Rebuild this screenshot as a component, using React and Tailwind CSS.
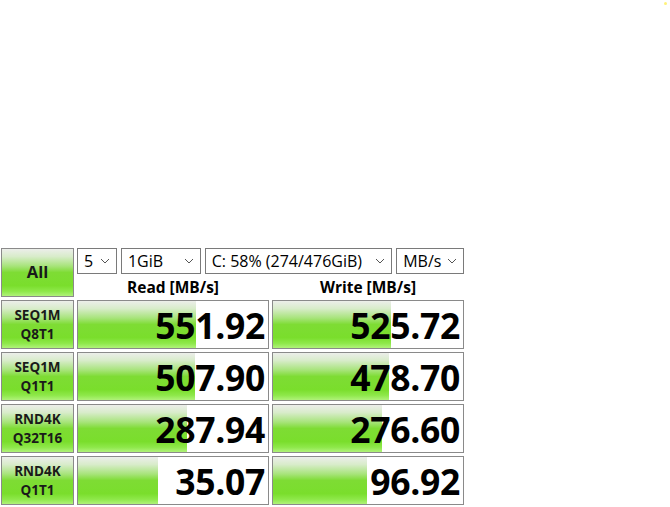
import React from "react";

const grad =
  "bg-[linear-gradient(to_bottom,#eceeea_0%,#d8ecca_16%,#a8e47c_36%,#7edc34_50%,#7ade2c_78%,#8ee84a_90%,#b0f27a_100%)]";

function Chevron() {
  return (
    <svg width="10" height="6" viewBox="0 0 10 6" className="shrink-0">
      <path d="M1 1 L5 5 L9 1" fill="none" stroke="#555" strokeWidth="1" />
    </svg>
  );
}

function Select({ w, label }) {
  return (
    <div
      className={`${w} h-[26px] border border-[#7a7a7a] bg-white flex items-center justify-between pl-[6px] pr-[6px] text-[16px] text-black leading-none`}
    >
      <span className="whitespace-nowrap">{label}</span>
      <Chevron />
    </div>
  );
}

function Btn({ l1, l2 }) {
  return (
    <div
      className={`h-[49px] border border-[#8a8a8a] ${grad} flex flex-col items-center justify-center text-[13.5px] font-bold text-[#1a1a1a] leading-[19px]`}
    >
      <span>{l1}</span>
      <span>{l2}</span>
    </div>
  );
}

function Cell({ value, fill }) {
  return (
    <div className="relative h-[49px] border border-[#8a8a8a] bg-white overflow-hidden">
      <div className={`absolute left-0 top-0 bottom-0 ${fill} ${grad}`} />
      <div className="relative h-full flex items-center justify-end pr-[3px] pt-[3px] text-[35.5px] font-bold text-black leading-none tracking-[-0.3px]">
        {value}
      </div>
    </div>
  );
}

const rows = [
  { l1: "SEQ1M", l2: "Q8T1", r: "551.92", rf: "w-[118px]", w: "525.72", wf: "w-[118px]" },
  { l1: "SEQ1M", l2: "Q1T1", r: "507.90", rf: "w-[117px]", w: "478.70", wf: "w-[116px]" },
  { l1: "RND4K", l2: "Q32T16", r: "287.94", rf: "w-[109px]", w: "276.60", wf: "w-[109px]" },
  { l1: "RND4K", l2: "Q1T1", r: "35.07", rf: "w-[80px]", w: "96.92", wf: "w-[94px]" },
];

export default function App() {
  return (
    <div
      className="relative w-[670px] h-[507px] bg-white overflow-hidden pt-[248px] pl-[1px]"
      style={{ fontFamily: '"Open Sans", "Noto Sans", sans-serif' }}
    >
      <div className="absolute right-[3px] top-[2px] w-[3px] h-[3px] rounded-full bg-[#fff27a]" />
      <div className="grid grid-cols-[73px_192px_192px] gap-x-[3px] gap-y-[3px]">
        <div
          className={`h-[49px] border border-[#8a8a8a] ${grad} flex items-center justify-center text-[16.5px] font-bold text-[#1a1a1a]`}
        >
          All
        </div>
        <div className="col-span-2 h-[49px] flex flex-col">
          <div className="flex gap-[4px]">
            <Select w="w-[40px]" label="5" />
            <Select w="w-[80px]" label="1GiB" />
            <Select w="w-[188px]" label="C: 58% (274/476GiB)" />
            <Select w="w-[68px]" label="MB/s" />
          </div>
          <div className="grid grid-cols-[192px_192px] gap-x-[3px] h-[23px] items-center text-[15.5px] font-bold text-black leading-none pt-[5px]">
            <div className="text-center">Read [MB/s]</div>
            <div className="text-center">Write [MB/s]</div>
          </div>
        </div>
        {rows.map((r, i) => (
          <React.Fragment key={i}>
            <Btn l1={r.l1} l2={r.l2} />
            <Cell value={r.r} fill={r.rf} />
            <Cell value={r.w} fill={r.wf} />
          </React.Fragment>
        ))}
      </div>
    </div>
  );
}
